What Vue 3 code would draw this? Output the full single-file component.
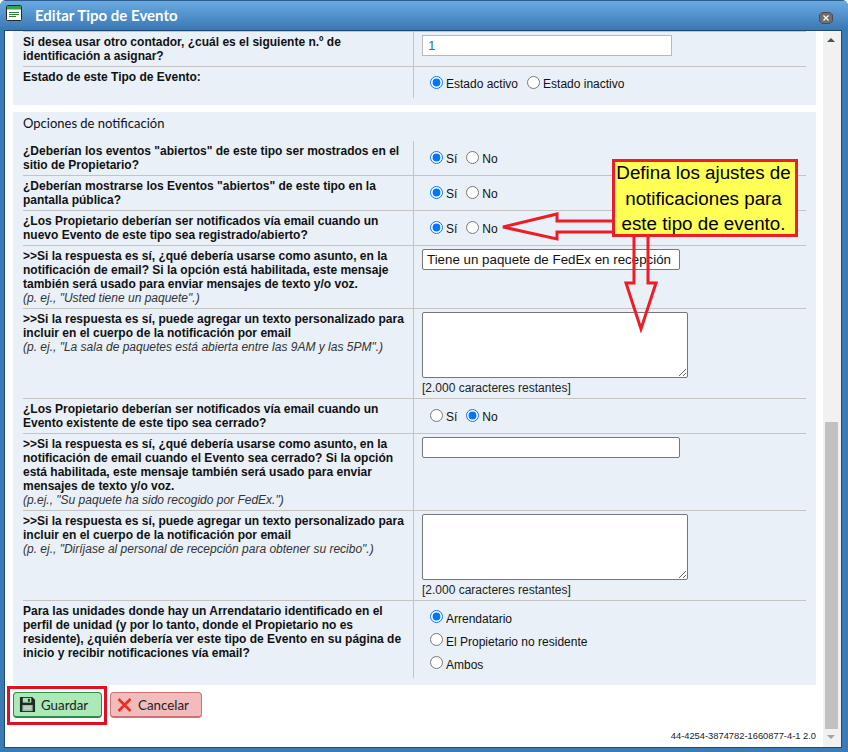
<script setup>
const rows = [
  { h: 35, text: ['¿Deberían los eventos "abiertos" de este tipo ser mostrados en el', 'sitio de Propietario?'], radios: ['Sí', 'No'], on: 0, name: 'a' },
  { h: 35, text: ['¿Deberían mostrarse los Eventos "abiertos" de este tipo en la', 'pantalla pública?'], radios: ['Sí', 'No'], on: 0, name: 'b' },
  { h: 35, text: ['¿Los Propietario deberían ser notificados vía email cuando un', 'nuevo Evento de este tipo sea registrado/abierto?'], radios: ['Sí', 'No'], on: 0, name: 'c' },
  { h: 63, text: ['>>Si la respuesta es sí, ¿qué debería usarse como asunto, en la', 'notificación de email? Si la opción está habilitada, este mensaje', 'también será usado para enviar mensajes de texto y/o voz.'], note: '(p. ej., "Usted tiene un paquete".)', input: 'Tiene un paquete de FedEx en recepción' },
  { h: 90, text: ['>>Si la respuesta es sí, puede agregar un texto personalizado para', 'incluir en el cuerpo de la notificación por email'], note: '(p. ej., "La sala de paquetes está abierta entre las 9AM y las 5PM".)', area: true },
  { h: 35, text: ['¿Los Propietario deberían ser notificados vía email cuando un', 'Evento existente de este tipo sea cerrado?'], radios: ['Sí', 'No'], on: 1, name: 'd' },
  { h: 77, text: ['>>Si la respuesta es sí, ¿qué debería usarse como asunto, en la', 'notificación de email cuando el Evento sea cerrado? Si la opción', 'está habilitada, este mensaje también será usado para enviar', 'mensajes de texto y/o voz.'], note: '(p.ej., "Su paquete ha sido recogido por FedEx.")', input: '' },
  { h: 90, text: ['>>Si la respuesta es sí, puede agregar un texto personalizado para', 'incluir en el cuerpo de la notificación por email'], note: '(p. ej., "Diríjase al personal de recepción para obtener su recibo".)', area: true },
]
</script>

<template>
  <div class="window">
    <header class="titlebar">
      <svg class="appicon" width="17" height="17" viewBox="0 0 17 17">
        <rect x="0.5" y="0.5" width="15" height="15" rx="1" fill="#fff" stroke="#1e2a22" />
        <rect x="1" y="1" width="14" height="3.5" fill="#35a34a" />
        <path d="M3 7.5h10M3 9.5h10M3 11.5h7" stroke="#2c7a3c" stroke-width="1" />
      </svg>
      <span class="title">Editar Tipo de Evento</span>
      <span class="close">
        <svg width="14" height="12" viewBox="0 0 14 12"><path d="M3 .5h8L13.500 3v6L11 11.500H3L.5 9V3z" fill="#6f6f6f" stroke="#4c4c4c" /><path d="M4.500 3.500l5 5M9.500 3.500l-5 5" stroke="#fff" stroke-width="1.300" /></svg>
      </span>
    </header>
    <div class="body">
      <div class="content">
        <section class="panel first">
          <div class="row top" style="height:36px">
            <div class="label"><div>Si desea usar otro contador, ¿cuál es el siguiente n.º de</div><div>identificación a asignar?</div></div>
            <div class="field"><input class="count" value="1" /></div>
          </div>
          <div class="row last" style="height:31px">
            <div class="label">Estado de este Tipo de Evento:</div>
            <div class="field radios state">
              <label><input type="radio" name="st" checked />Estado activo</label>
              <label><input type="radio" name="st" />Estado inactivo</label>
            </div>
          </div>
        </section>
        <section class="panel second">
          <h3>Opciones de notificación</h3>
          <div v-for="r in rows" :key="r.text[0] + r.h" class="row" :style="{ height: r.h + 'px' }">
            <div class="label">
              <div v-for="t in r.text" :key="t">{{ t }}</div>
              <em v-if="r.note">{{ r.note }}</em>
            </div>
            <div class="field" :class="{ radios: r.radios }">
              <template v-if="r.radios">
                <label v-for="(o, i) in r.radios" :key="o"><input type="radio" :name="r.name" :checked="i === r.on" />{{ o }}</label>
              </template>
              <input v-else-if="r.input !== undefined" class="subject" :value="r.input" />
              <template v-else>
                <textarea></textarea>
                <div class="remaining">[2.000 caracteres restantes]</div>
              </template>
            </div>
          </div>
          <div class="row last" style="height:77px">
            <div class="label">
              <div>Para las unidades donde hay un Arrendatario identificado en el</div>
              <div>perfil de unidad (y por lo tanto, donde el Propietario no es</div>
              <div>residente), ¿quién debería ver este tipo de Evento en su página de</div>
              <div>inicio y recibir notificaciones vía email?</div>
            </div>
            <div class="field stack">
              <label><input type="radio" name="w" checked />Arrendatario</label>
              <label><input type="radio" name="w" />El Propietario no residente</label>
              <label><input type="radio" name="w" />Ambos</label>
            </div>
          </div>
        </section>
        <footer class="actions">
          <button class="btn save">
            <svg width="17" height="17" viewBox="0 0 18 18"><path d="M1 1h13l3 3v13H1z" fill="#1f2a24" /><rect x="4" y="2" width="9" height="5" fill="#a9e3b5" /><rect x="9.500" y="3" width="2" height="3" fill="#1f2a24" /><rect x="3.500" y="9.500" width="11" height="6.500" fill="#9fb9a5" /><path d="M5 11.500h8M5 13.500h8" stroke="#dfe9e1" /></svg>
            Guardar
          </button>
          <button class="btn cancel">
            <svg width="15" height="14" viewBox="0 0 15 14"><path d="M1.500 1l12 12M13.500 1l-12 12" stroke="#ee2b24" stroke-width="2.600" /></svg>
            Cancelar
          </button>
        </footer>
        <div class="version">44-4254-3874782-1660877-4-1 2.0</div>
        <div class="savebox"></div>
      </div>
      <div class="scrollbar">
        <span class="up"></span>
        <span class="thumb"></span>
        <span class="down"></span>
      </div>
    </div>

    <svg class="arrows" width="848" height="752" viewBox="0 0 848 752">
      <path d="M612 221H557V214L503 227L557 239V232H612" fill="none" stroke="#ee1c25" stroke-width="3" />
      <path d="M634 236V283H626L641 329L656 283H648V236" fill="none" stroke="#ee1c25" stroke-width="3" />
    </svg>
    <div class="callout"><span>Defina los ajustes de<br />notificaciones para<br />este tipo de evento.</span></div>
  </div>
</template>

<style>
html, body { margin: 0; padding: 0; }
</style>

<style scoped>
.window {
  position: relative;
  width: 848px;
  height: 752px;
  box-sizing: border-box;
  display: flex;
  flex-direction: column;
  background: #3a7ab5;
  border-radius: 6px 6px 0 0;
  overflow: hidden;
  font-family: "Liberation Sans", Arial, sans-serif;
  color: #111;
}
.titlebar {
  height: 30px;
  flex: none;
  display: flex;
  align-items: center;
  padding: 0 15px 0 6px;
  background: linear-gradient(#6aaae2, #3a78b4);
  border-top: 1px solid #2c5f8f;
  box-sizing: border-box;
}
.appicon { margin-top: -4px; }
.title {
  margin-left: 12px;
  margin-top: -2px;
  font: 700 15px Lato, sans-serif;
  color: #fff;
}
.close { margin-left: auto; display: flex; margin-top: 4px; }
.body {
  flex: none;
  height: 718px;
  margin: 0 6px 0 4px;
  display: flex;
  background: #fff;
  border: 1px solid #1d4a73;
  box-sizing: border-box;
}
.content {
  position: relative;
  flex: none;
  width: 818px;
  padding-left: 8px;
  box-sizing: border-box;
}
.panel {
  width: 803px;
  background: #e9f0f8;
  box-sizing: border-box;
  padding: 0 10px;
}
.first { height: 74px; }
.second { height: 573px; margin-top: 7px; }
h3 {
  margin: 0;
  height: 29px;
  font: 400 13px/23px Lato, sans-serif;
  color: #111;
}
.row {
  display: flex;
  border-bottom: 1px solid #c4c4c4;
  box-sizing: border-box;
}
.row.top { border-top: 1px solid #c4c4c4; }
.row.last { border-bottom: 0; }
.label {
  width: 391px;
  flex: none;
  box-sizing: border-box;
  padding: 3px 0 0;
  border-right: 1px solid #c4c4c4;
  font-size: 12px;
  line-height: 14px;
  font-weight: 700;
  color: #111;
}
.label em {
  display: block;
  font-weight: 400;
  font-size: 12px;
  color: #333;
}
.field {
  flex: 1;
  padding: 3px 0 0 8px;
  font-size: 12px;
}
.radios {
  display: flex;
  align-items: center;
  gap: 9px;
  padding: 0 0 0 16px;
  height: 34px;
}
.radios.state { height: 33px; }
.radios label, .stack label {
  display: flex;
  align-items: center;
  line-height: 16px;
  padding-top: 1px;
}
input[type="radio"] {
  width: 13px;
  height: 13px;
  margin: -1px 3px 2px 0;
}
.stack { display: flex; flex-direction: column; gap: 4px; padding: 8px 0 0 16px; }
.stack label { height: 18px; }
.stack input[type="radio"] { margin: -2px 3px 3px 0; }
.count {
  width: 250px;
  height: 21px;
  box-sizing: border-box;
  border: 1px solid #b8b8b8;
  padding: 0 5px;
  font: 13.33px "Liberation Sans", sans-serif;
  color: #1576d2;
}
.subject {
  width: 258px;
  height: 21px;
  box-sizing: border-box;
  border: 1px solid #767676;
  border-radius: 2px;
  padding: 0 4px;
  font: 13.33px "Liberation Sans", sans-serif;
  color: #111;
}
textarea {
  display: block;
  width: 266px;
  height: 66px;
  box-sizing: border-box;
  border: 1px solid #767676;
  border-radius: 2px;
}
.remaining { margin-top: 3px; line-height: 14px; color: #222; }
.actions {
  display: flex;
  gap: 8px;
  padding: 7px 0 0;
}
.btn {
  height: 26px;
  display: flex;
  align-items: center;
  gap: 5px;
  padding: 0 5px;
  box-sizing: border-box;
  font: 13.33px Lato, sans-serif;
  color: #222;
  border-radius: 4px;
}
.save { width: 89px; background: #ace9b8; border: 1px solid #2d8a3e; border-bottom-width: 2px; }
.cancel { width: 92px; background: #f2bcbc; border: 1px solid #d07070; border-bottom-width: 2px; gap: 6px; padding-left: 6px; }
.version {
  position: absolute;
  right: 7px;
  top: 699px;
  font-size: 9.33px;
  line-height: 12px;
  color: #222;
}
.savebox {
  position: absolute;
  left: 2px;
  top: 655px;
  width: 100px;
  height: 39px;
  box-sizing: border-box;
  border: 3px solid #e01020;
}
.scrollbar {
  position: relative;
  flex: 1;
  background: #f1f1f1;
}
.thumb {
  position: absolute;
  left: 2px;
  top: 391px;
  width: 13px;
  height: 307px;
  background: #c1c1c1;
}
.up, .down {
  position: absolute;
  left: 4px;
  width: 0;
  height: 0;
  border-left: 4px solid transparent;
  border-right: 4px solid transparent;
}
.up { top: 7px; border-bottom: 4px solid #505050; }
.down { top: 704px; border-top: 4px solid #a3a3a3; }
.arrows { position: absolute; left: 0; top: 0; pointer-events: none; }
.callout {
  position: absolute;
  left: 612px;
  top: 159px;
  width: 186px;
  height: 78px;
  box-sizing: border-box;
  border: 3px solid #ee1c25;
  background: #ffff55;
  font-size: 18.8px;
  line-height: 25.5px;
  text-align: center;
  color: #000;
  white-space: nowrap;
  padding-right: 3px;
}
.callout span { display: block; margin-top: -2px; }
</style>
